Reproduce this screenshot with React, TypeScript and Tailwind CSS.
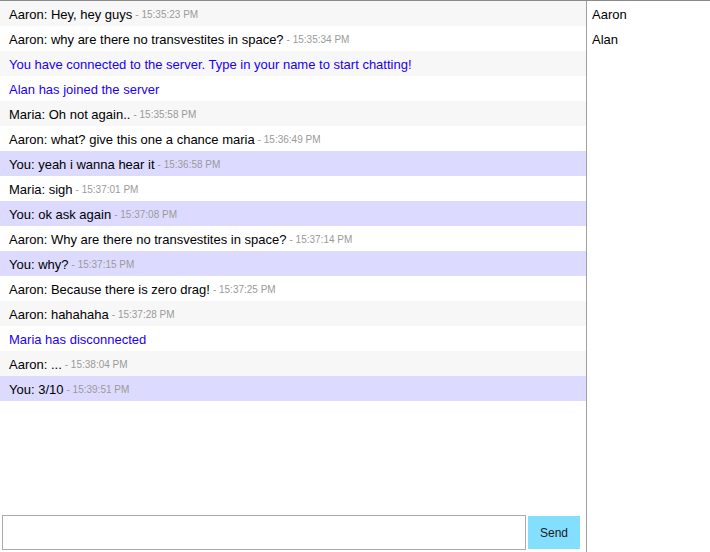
const messages: { text: string; time?: string; kind: 'user' | 'me' | 'system' }[] = [
  { text: 'Aaron: Hey, hey guys', time: '15:35:23 PM', kind: 'user' },
  { text: 'Aaron: why are there no transvestites in space?', time: '15:35:34 PM', kind: 'user' },
  { text: 'You have connected to the server. Type in your name to start chatting!', kind: 'system' },
  { text: 'Alan has joined the server', kind: 'system' },
  { text: 'Maria: Oh not again..', time: '15:35:58 PM', kind: 'user' },
  { text: 'Aaron: what? give this one a chance maria', time: '15:36:49 PM', kind: 'user' },
  { text: 'You: yeah i wanna hear it', time: '15:36:58 PM', kind: 'me' },
  { text: 'Maria: sigh', time: '15:37:01 PM', kind: 'user' },
  { text: 'You: ok ask again', time: '15:37:08 PM', kind: 'me' },
  { text: 'Aaron: Why are there no transvestites in space?', time: '15:37:14 PM', kind: 'user' },
  { text: 'You: why?', time: '15:37:15 PM', kind: 'me' },
  { text: 'Aaron: Because there is zero drag!', time: '15:37:25 PM', kind: 'user' },
  { text: 'Aaron: hahahaha', time: '15:37:28 PM', kind: 'user' },
  { text: 'Maria has disconnected', kind: 'system' },
  { text: 'Aaron: ...', time: '15:38:04 PM', kind: 'user' },
  { text: 'You: 3/10', time: '15:39:51 PM', kind: 'me' },
];

const users = ['Aaron', 'Alan'];

export default function App() {
  return (
    <div className="flex h-[552px] w-[710px] border-t border-[#8a8a8a] bg-white font-['Liberation_Sans',Arial,sans-serif] text-[13px] text-black">
      {/* chat column */}
      <div className="flex w-[586px] flex-col">
        <ul className="flex-1">
          {messages.map((m, i) => (
            <li
              key={i}
              className={
                'flex h-[25px] items-center px-[9px] pt-[2px] ' +
                (m.kind === 'me' ? 'bg-[#dcdaff] ' : i % 2 === 0 ? 'bg-[#f7f7f7] ' : 'bg-white ') +
                (m.kind === 'system' ? 'text-[#1a00f2]' : '')
              }
            >
              <span>{m.text}</span>
              {m.time && <span className="ml-[3px] text-[10px] text-[#9a9a9a]">- {m.time}</span>}
            </li>
          ))}
        </ul>

        <form className="flex items-center gap-[2px] px-[2px] pb-[2px]" onSubmit={(e) => e.preventDefault()}>
          <input className="h-[35px] w-[524px] border border-[#aaaaaa] px-2 outline-none" />
          <button type="submit" className="h-[33px] w-[52px] bg-[#84dfff] pt-[1px] text-[12px] text-[#1a1a1a]">
            Send
          </button>
        </form>
      </div>

      {/* user list */}
      <ul className="flex-1 border-l border-[#a0a0a0] px-[5px]">
        {users.map((u) => (
          <li key={u} className="flex h-[25px] items-center pt-[2px]">
            {u}
          </li>
        ))}
      </ul>
    </div>
  );
}
